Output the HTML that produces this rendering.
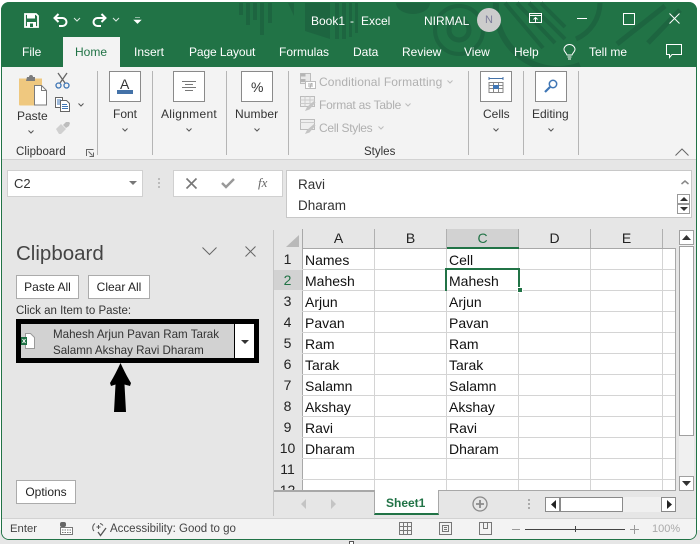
<!DOCTYPE html>
<html><head><meta charset="utf-8"><style>
html,body{margin:0;padding:0;background:#fff}
#p{position:relative;width:700px;height:544px;overflow:hidden;background:#fff;font-family:"Liberation Sans",sans-serif;color:#333}
.a{position:absolute}
.t{position:absolute;white-space:nowrap;font-size:12px;line-height:16px}
.w{color:#fff}
.g{color:#b0b0b0}
.box{position:absolute;background:#fff;border:1px solid #8a8a8a;box-sizing:border-box}
.btn{position:absolute;background:#fff;border:1px solid #ababab;box-sizing:border-box;font-size:12px;line-height:22px;text-align:center;color:#333}
.sep{position:absolute;width:1px;background:#b5b5b5;top:71px;height:84px}
.c{position:absolute;font-size:14px;line-height:20px;color:#111;white-space:nowrap}
.r{position:absolute;left:274px;width:27px;text-align:center;font-size:14px;line-height:20px;color:#222}
.h{position:absolute;top:229px;text-align:center;font-size:14px;line-height:19px;color:#222}
.hl{position:absolute;height:1px;left:302px;width:373px;background:#d4d4d4}
.vl{position:absolute;width:1px;top:249px;height:241px;background:#d4d4d4}
svg{position:absolute;overflow:visible}
</style></head><body><div id="p">

<!-- outer bottom strip -->
<div class="a" style="left:0;top:530px;width:700px;height:14px;background:#e6e6e6"></div>
<div class="a" style="left:349px;top:541px;width:5px;height:3px;border:1px solid #555;border-bottom:0;box-sizing:border-box;background:#fff"></div>

<!-- window -->
<div class="a" style="left:1px;top:2px;width:696px;height:538px;background:#e6e6e6;border:1px solid #217346;border-top:0;box-sizing:border-box;border-radius:8px 8px 8px 8px;overflow:hidden"></div>
<div class="a" style="left:1px;top:2px;width:696px;height:65px;background:#217346;border-radius:8px 8px 0 0"></div>

<!-- title pattern -->
<svg style="left:0;top:0" width="700" height="67" viewBox="0 0 700 67">
<g fill="#1d6540">
<rect x="239" y="3" width="4" height="12"/><rect x="246" y="3" width="4" height="22"/><rect x="253" y="3" width="4" height="17"/><rect x="260" y="3" width="4" height="32"/><rect x="268" y="3" width="4" height="20"/>
<path d="M288 3h6v13z"/><path d="M305 3h25v36l-25-8z"/><rect x="335" y="3" width="4" height="36"/><rect x="342" y="3" width="4" height="36"/><rect x="349" y="3" width="3" height="34"/><rect x="355" y="3" width="3" height="30"/>
<path d="M396 3h34a17 11 0 0 1-34 0z"/>
</g>
<g fill="none" stroke="#1d6540" stroke-width="5">
<circle cx="459" cy="30" r="10"/>
<circle cx="459" cy="30" r="24" stroke-width="4"/>
<path d="M496 3a62 62 0 0 0 84 62" stroke-width="6"/>
<path d="M505 3l38 45M517 3l38 40M529 3l36 36M541 3l24 24" stroke-width="4"/>
<path d="M665 6l-48 38M680 10l-32 33" stroke-width="5"/>
<path d="M600 3a40 40 0 0 1-24 36" stroke-width="5"/>
</g>
</svg>

<!-- QAT -->
<svg style="left:24px;top:13px" width="15" height="15" viewBox="0 0 15 15"><path d="M1 1h11l2 2v11H1z" fill="none" stroke="#fff" stroke-width="1.800"/><rect x="3" y="1" width="8" height="4.500" fill="#fff"/><rect x="3" y="9" width="9" height="5" fill="#fff"/><rect x="6" y="10.500" width="3" height="3.500" fill="#217346"/></svg>
<svg style="left:53px;top:13px" width="15" height="14" viewBox="0 0 15 14"><path d="M5.500 1L1.500 5 5.500 9M2 5h7.500a3.800 3.800 0 0 1 0 8H6" fill="none" stroke="#fff" stroke-width="2"/></svg>
<svg style="left:74px;top:18px" width="6" height="4"><path d="M0 0l3 3 3-3" fill="none" stroke="#dcebe2" stroke-width="1"/></svg>
<svg style="left:92px;top:13px" width="15" height="14" viewBox="0 0 15 14"><path d="M9.500 1l4 4-4 4M13 5H5.500a3.800 3.800 0 0 0 0 8H9" fill="none" stroke="#fff" stroke-width="2"/></svg>
<svg style="left:113px;top:18px" width="6" height="4"><path d="M0 0l3 3 3-3" fill="none" stroke="#dcebe2" stroke-width="1"/></svg>
<svg style="left:134px;top:17px" width="7" height="7"><path d="M1 .5h5M0 3h7l-3.500 3.500z" fill="#fff" stroke="#fff" stroke-width=".6"/></svg>

<div class="t w" style="left:311px;top:13px;font-size:12px">Book1</div>
<div class="t w" style="left:350px;top:13px">-</div>
<div class="t w" style="left:361px;top:13px">Excel</div>
<div class="t w" style="left:424px;top:13px">NIRMAL</div>
<div class="a" style="left:477px;top:8px;width:24px;height:24px;border-radius:50%;background:#ccc;color:#7d7d9a;font-size:11px;line-height:24px;text-align:center">N</div>
<svg style="left:529px;top:13px" width="14" height="11" viewBox="0 0 14 11"><path d="M.5.500h12v9H.5zM.5 2.500h12M6.500 9V4.500M4.500 6.500l2-2 2 2" fill="none" stroke="#fff"/></svg>
<div class="a" style="left:577px;top:18px;width:10px;height:1px;background:#fff"></div>
<div class="a" style="left:623px;top:13px;width:10px;height:10px;border:1px solid #fff"></div>
<svg style="left:669px;top:13px" width="11" height="11"><path d="M.5.500l10 10M10.500.500l-10 10" stroke="#fff" fill="none"/></svg>

<!-- tabs -->
<div class="a" style="left:63px;top:37px;width:57px;height:31px;background:#f3f3f3"></div>
<div class="t w" style="left:22px;top:44px">File</div>
<div class="t" style="left:75px;top:44px;color:#217346">Home</div>
<div class="t w" style="left:134px;top:44px">Insert</div>
<div class="t w" style="left:189px;top:44px;letter-spacing:-.1px">Page Layout</div>
<div class="t w" style="left:279px;top:44px">Formulas</div>
<div class="t w" style="left:353px;top:44px">Data</div>
<div class="t w" style="left:402px;top:44px">Review</div>
<div class="t w" style="left:464px;top:44px">View</div>
<div class="t w" style="left:514px;top:44px">Help</div>
<svg style="left:563px;top:44px" width="13" height="17" viewBox="0 0 13 17"><path d="M4 11C3 8.500 1 7.500 1 5.500a5.500 5 0 0 1 11 0c0 2-2 3-3 5.500zM4.500 13h4M5 15h3" fill="none" stroke="#fff"/></svg>
<div class="t w" style="left:589px;top:44px">Tell me</div>
<svg style="left:666px;top:44px" width="16" height="15" viewBox="0 0 16 15"><path d="M.5.500h15v10H6L3.500 13.500v-3h-3z" fill="none" stroke="#fff"/></svg>

<!-- ribbon -->
<div class="a" style="left:2px;top:67px;width:694px;height:92px;background:#f3f3f3;border-bottom:1px solid #d2d2d2"></div>
<div class="sep" style="left:97px"></div><div class="sep" style="left:152px"></div><div class="sep" style="left:226px"></div><div class="sep" style="left:288px"></div><div class="sep" style="left:468px"></div><div class="sep" style="left:523px"></div><div class="sep" style="left:578px"></div>

<!-- clipboard group -->
<svg style="left:18px;top:74px" width="30" height="32" viewBox="0 0 30 32"><path d="M1 4.500h23v27H2a1 1 0 0 1-1-1z" fill="#efc87f"/><path d="M9 3h2a2 2 0 0 1 4 0h2v4H8z" fill="#7c7c7c"/><path d="M16.500 11.500h7l5 5v14.500h-12z" fill="#fff" stroke="#7b7b7b"/><path d="M23.500 11.500v5h5" fill="none" stroke="#7b7b7b"/></svg>
<div class="t" style="left:17px;top:108px">Paste</div>
<svg style="left:28px;top:130px" width="6" height="4"><path d="M.500.500l2.500 2.500 2.500-2.500" fill="none" stroke="#555"/></svg>
<svg style="left:55px;top:72px" width="16" height="17" viewBox="0 0 16 17"><path d="M3 1l7 10M12 1L5 11" stroke="#666" stroke-width="1.300" fill="none"/><circle cx="3.500" cy="13.500" r="2.500" fill="none" stroke="#3f76b5" stroke-width="1.300"/><circle cx="11.500" cy="13.500" r="2.500" fill="none" stroke="#3f76b5" stroke-width="1.300"/></svg>
<svg style="left:55px;top:97px" width="16" height="15" viewBox="0 0 16 15"><path d="M.500.500h7v10h-7z" fill="#fff" stroke="#666"/><path d="M5.500 3.500h6l3 3v8h-9z" fill="#fff" stroke="#666"/><path d="M2 3h4M2 5h3M2 7h3M7 7.500h5M7 9.500h6M7 11.500h6" stroke="#3f76b5"/></svg>
<svg style="left:78px;top:103px" width="6" height="4"><path d="M.500.500l2.500 2.500 2.500-2.500" fill="none" stroke="#555"/></svg>
<svg style="left:55px;top:120px" width="17" height="15" viewBox="0 0 17 15"><path d="M1 9l5-5 5 5-5 5H4z" fill="#d0d0d0"/><path d="M8 5l3-3 3 0 1 1-1 3-3 2z" fill="#bdbdbd"/></svg>
<div class="t" style="left:16px;top:144px;font-size:11.500px;letter-spacing:.05px">Clipboard</div>
<svg style="left:86px;top:149px" width="8" height="8"><path d="M.500 7V.500H7.500M2.500 2.500l4 4M7.500 3.500v4h-4" fill="none" stroke="#666"/></svg>

<!-- Font -->
<div class="box" style="left:109px;top:71px;width:32px;height:31px"></div>
<div class="t" style="left:120px;top:77px;font-size:14px;line-height:14px;color:#333">A</div>
<div class="a" style="left:117px;top:90px;width:16px;height:4px;background:#4472a8"></div>
<div class="t" style="left:113px;top:106px">Font</div>
<svg style="left:122px;top:128px" width="6" height="4"><path d="M.500.500l2.500 2.500 2.500-2.500" fill="none" stroke="#555"/></svg>

<!-- Alignment -->
<div class="box" style="left:173px;top:71px;width:32px;height:31px"></div>
<svg style="left:182px;top:81px" width="14" height="10"><path d="M0 .500h14M3 3.500h8M0 6.500h14M3 9.500h8" stroke="#777"/></svg>
<div class="t" style="left:161px;top:106px;letter-spacing:.3px">Alignment</div>
<svg style="left:186px;top:128px" width="6" height="4"><path d="M.500.500l2.500 2.500 2.500-2.500" fill="none" stroke="#555"/></svg>

<!-- Number -->
<div class="box" style="left:241px;top:71px;width:32px;height:31px"></div>
<div class="t" style="left:251px;top:79px;font-size:14px">%</div>
<div class="t" style="left:235px;top:106px;letter-spacing:.1px">Number</div>
<svg style="left:254px;top:128px" width="6" height="4"><path d="M.500.500l2.500 2.500 2.500-2.500" fill="none" stroke="#555"/></svg>

<!-- Styles -->
<svg style="left:300px;top:73px" width="16" height="16" viewBox="0 0 16 16"><path d="M.500.500h10v10H.500z" fill="#e8e8e8" stroke="#bcbcbc"/><path d="M.500.500h5v3h-5zM.500 6h5v3h-5z" fill="#b5b5b5"/><path d="M5.500 8.500h10v7h-10z" fill="#fff" stroke="#bcbcbc"/><path d="M8 11h5M8 13h5M11.500 10l-1.500 5" stroke="#aaa"/></svg>
<div class="t g" style="left:319px;top:74px;letter-spacing:.12px">Conditional Formatting</div>
<svg style="left:447px;top:80px" width="6" height="4"><path d="M.500.500l2.500 2.500 2.500-2.500" fill="none" stroke="#bbb"/></svg>
<svg style="left:300px;top:96px" width="16" height="16" viewBox="0 0 16 16"><path d="M.500.500h14v10H.500z" fill="#eee" stroke="#bcbcbc"/><path d="M5 .500v10M10 .500v10M.500 4h14M.500 7.500h14" stroke="#ccc"/><path d="M5 15l2-4 7-6 1.500 1.500-6 7z" fill="#c4c4c4"/></svg>
<div class="t g" style="left:319px;top:97px;letter-spacing:-.25px">Format as Table</div>
<svg style="left:405px;top:103px" width="6" height="4"><path d="M.500.500l2.500 2.500 2.500-2.500" fill="none" stroke="#bbb"/></svg>
<svg style="left:300px;top:119px" width="16" height="16" viewBox="0 0 16 16"><path d="M.500.500h14v10H.500z" fill="#eee" stroke="#bcbcbc"/><path d="M.500 3.500h14" stroke="#ccc"/><path d="M5 15l2-4 7-6 1.500 1.500-6 7z" fill="#c4c4c4"/></svg>
<div class="t g" style="left:319px;top:120px;letter-spacing:-.3px">Cell Styles</div>
<svg style="left:378px;top:126px" width="6" height="4"><path d="M.500.500l2.500 2.500 2.500-2.500" fill="none" stroke="#bbb"/></svg>
<div class="t" style="left:364px;top:144px;font-size:11.500px">Styles</div>

<!-- Cells -->
<div class="box" style="left:480px;top:71px;width:32px;height:31px"></div>
<svg style="left:488px;top:77px" width="16" height="18" viewBox="0 0 16 18"><path d="M1 1.500h14M1 0v3M15 0v3" stroke="#4472a8"/><path d="M1 5.500h14v10H1zM1 8.500h14M1 11.500h14M5.500 5.500v10M10.500 5.500v10" fill="#fff" stroke="#888"/><rect x="5" y="8" width="6" height="4" fill="#3f76b5"/></svg>
<div class="t" style="left:483px;top:106px">Cells</div>
<svg style="left:493px;top:128px" width="6" height="4"><path d="M.500.500l2.500 2.500 2.500-2.500" fill="none" stroke="#555"/></svg>

<!-- Editing -->
<div class="box" style="left:535px;top:71px;width:32px;height:31px"></div>
<svg style="left:544px;top:79px" width="14" height="14" viewBox="0 0 14 14"><circle cx="9" cy="5" r="3.700" fill="none" stroke="#3f76b5" stroke-width="1.500"/><path d="M6 8l-5 5" stroke="#3f76b5" stroke-width="2.200"/></svg>
<div class="t" style="left:532px;top:106px">Editing</div>
<svg style="left:548px;top:128px" width="6" height="4"><path d="M.500.500l2.500 2.500 2.500-2.500" fill="none" stroke="#555"/></svg>
<svg style="left:675px;top:148px" width="14" height="8"><path d="M.500 7.500l6.500-6.500 6.500 6.500" fill="none" stroke="#666"/></svg>

<!-- formula bar -->
<div class="btn" style="left:7px;top:170px;width:136px;height:27px;border-color:#d0d0d0"></div>
<div class="t" style="left:14px;top:176px;font-size:13px">C2</div>
<svg style="left:129px;top:181px" width="8" height="4"><path d="M0 0h8L4 4z" fill="#777"/></svg>
<div class="a" style="left:158px;top:178px;width:2px;height:2px;background:#bbb;box-shadow:0 4px #bbb,0 8px #bbb"></div>
<div class="btn" style="left:173px;top:170px;width:110px;height:27px;border-color:#d0d0d0"></div>
<svg style="left:186px;top:178px" width="11" height="11"><path d="M.500.500l10 10M10.500.500l-10 10" stroke="#777" stroke-width="1.600"/></svg>
<svg style="left:221px;top:178px" width="14" height="11"><path d="M1 5l4 4 8-8" stroke="#999" stroke-width="2.400" fill="none"/></svg>
<div class="t" style="left:258px;top:175px;font-family:'Liberation Serif',serif;font-style:italic;font-size:13px;color:#666">fx</div>
<div class="btn" style="left:286px;top:170px;width:406px;height:48px;border-color:#c8c8c8"></div>
<div class="t" style="left:298px;top:176px;font-size:13.500px;line-height:18px">Ravi</div>
<div class="t" style="left:298px;top:197px;font-size:13.500px;line-height:18px">Dharam</div>
<svg style="left:681px;top:180px" width="8" height="5"><path d="M.500 4l3.500-3 3.500 3" stroke="#888" stroke-width="1.500" fill="none"/></svg>
<div class="box" style="left:677px;top:194px;width:13px;height:10px;border-color:#999"></div>
<div class="box" style="left:677px;top:204px;width:13px;height:10px;border-color:#999"></div>
<svg style="left:680px;top:197px" width="8" height="14"><path d="M0 4l4-4 4 4zM0 10h8l-4 4z" fill="#333"/></svg>

<!-- clipboard pane -->
<div class="a" style="left:273px;top:230px;width:1px;height:286px;background:#c6c6c6"></div>
<div class="t" style="left:16px;top:241px;font-size:20.500px;line-height:26px;color:#444">Clipboard</div>
<svg style="left:202px;top:247px" width="15" height="9"><path d="M.500.500l7 7 7-7" fill="none" stroke="#666"/></svg>
<svg style="left:245px;top:246px" width="11" height="11"><path d="M.500.500l10 10M10.500.500l-10 10" stroke="#666"/></svg>
<div class="btn" style="left:16px;top:275px;width:63px;height:24px;color:#222">Paste All</div>
<div class="btn" style="left:88px;top:275px;width:62px;height:24px;color:#222">Clear All</div>
<div class="t" style="left:16px;top:303px;font-size:11.500px">Click an Item to Paste:</div>
<div class="a" style="left:16px;top:319px;width:243px;height:44px;background:#000"></div>
<div class="a" style="left:21px;top:324px;width:213px;height:34px;background:#d2d2d2"></div>
<div class="a" style="left:235px;top:324px;width:19px;height:34px;background:#fff"></div>
<svg style="left:241px;top:340px" width="8" height="4"><path d="M0 0h8L4 4z" fill="#333"/></svg>
<svg style="left:21px;top:333px" width="14" height="17" viewBox="0 0 14 17"><path d="M4.500.500h5l4 4v11h-9z" fill="#fff" stroke="#9a9a9a"/><rect x="0" y="4" width="6" height="8" fill="#1e7145"/><path d="M1.500 6l3 4M4.500 6l-3 4" stroke="#fff"/></svg>
<div class="t" style="left:53px;top:327px;font-size:11.600px;color:#333">Mahesh Arjun Pavan Ram Tarak</div>
<div class="t" style="left:53px;top:343px;font-size:11.600px;color:#333">Salamn Akshay Ravi Dharam</div>
<svg style="left:110px;top:363px" width="22" height="50" viewBox="0 0 22 50"><path d="M10.500 0Q17 14 21 20l-1 3-5.500-1.500L16 49H4L5.500 21.500 1 23 0 20Q5 12 10.500 0z" fill="#000"/></svg>
<div class="btn" style="left:16px;top:480px;width:60px;height:24px;color:#222">Options</div>

<!-- grid -->
<div class="a" style="left:274px;top:229px;width:401px;height:261px;background:#fff"></div>
<div class="a" style="left:274px;top:229px;width:401px;height:19px;background:#e6e6e6"></div>
<div class="a" style="left:274px;top:248px;width:28px;height:242px;background:#e6e6e6"></div>
<div class="a" style="left:447px;top:229px;width:72px;height:19px;background:#d2d2d2"></div>
<div class="a" style="left:274px;top:270px;width:28px;height:20px;background:#d2d2d2"></div>
<svg style="left:286px;top:235px" width="13" height="12"><path d="M13 0v12H0z" fill="#b9b9b9"/></svg>
<div class="a" style="left:302px;top:229px;width:1px;height:261px;background:#a8a8a8"></div>
<div class="a" style="left:302px;top:248px;width:373px;height:1px;background:#a8a8a8"></div>
<div class="a" style="left:374px;top:229px;width:1px;height:19px;background:#b0b0b0"></div>
<div class="a" style="left:446px;top:229px;width:1px;height:19px;background:#b0b0b0"></div>
<div class="a" style="left:518px;top:229px;width:1px;height:19px;background:#b0b0b0"></div>
<div class="a" style="left:590px;top:229px;width:1px;height:19px;background:#b0b0b0"></div>
<div class="a" style="left:662px;top:229px;width:1px;height:19px;background:#b0b0b0"></div>
<div class="a" style="left:675px;top:248px;width:1px;height:243px;background:#a8a8a8"></div>
<div class="a" style="left:274px;top:490px;width:402px;height:1px;background:#a8a8a8"></div>
<div class="a" style="left:447px;top:247px;width:72px;height:2px;background:#217346"></div>

<div class="h" style="left:303px;width:71px">A</div>
<div class="h" style="left:375px;width:71px">B</div>
<div class="h" style="left:447px;width:71px;color:#217346">C</div>
<div class="h" style="left:519px;width:71px">D</div>
<div class="h" style="left:591px;width:71px">E</div>

<div class="hl" style="top:269px"></div><div class="hl" style="top:290px"></div><div class="hl" style="top:311px"></div><div class="hl" style="top:332px"></div><div class="hl" style="top:353px"></div><div class="hl" style="top:374px"></div><div class="hl" style="top:395px"></div><div class="hl" style="top:416px"></div><div class="hl" style="top:437px"></div><div class="hl" style="top:458px"></div><div class="hl" style="top:479px"></div>
<div class="vl" style="left:374px"></div><div class="vl" style="left:446px"></div><div class="vl" style="left:518px"></div><div class="vl" style="left:590px"></div><div class="vl" style="left:662px"></div>

<div class="r" style="top:249px">1</div>
<div class="r" style="top:270px;color:#217346">2</div>
<div class="r" style="top:291px">3</div>
<div class="r" style="top:312px">4</div>
<div class="r" style="top:333px">5</div>
<div class="r" style="top:354px">6</div>
<div class="r" style="top:375px">7</div>
<div class="r" style="top:396px">8</div>
<div class="r" style="top:417px">9</div>
<div class="r" style="top:438px">10</div>
<div class="r" style="top:459px">11</div>
<div class="a" style="left:274px;top:480px;width:28px;height:10px;overflow:hidden"><div class="r" style="left:0;top:0">12</div></div>

<div class="c" style="left:305px;top:250px">Names</div>
<div class="c" style="left:305px;top:271px">Mahesh</div>
<div class="c" style="left:305px;top:292px">Arjun</div>
<div class="c" style="left:305px;top:313px">Pavan</div>
<div class="c" style="left:305px;top:334px">Ram</div>
<div class="c" style="left:305px;top:355px">Tarak</div>
<div class="c" style="left:305px;top:376px">Salamn</div>
<div class="c" style="left:305px;top:397px">Akshay</div>
<div class="c" style="left:305px;top:418px">Ravi</div>
<div class="c" style="left:305px;top:439px">Dharam</div>
<div class="c" style="left:449px;top:250px">Cell</div>
<div class="c" style="left:449px;top:271px">Mahesh</div>
<div class="c" style="left:449px;top:292px">Arjun</div>
<div class="c" style="left:449px;top:313px">Pavan</div>
<div class="c" style="left:449px;top:334px">Ram</div>
<div class="c" style="left:449px;top:355px">Tarak</div>
<div class="c" style="left:449px;top:376px">Salamn</div>
<div class="c" style="left:449px;top:397px">Akshay</div>
<div class="c" style="left:449px;top:418px">Ravi</div>
<div class="c" style="left:449px;top:439px">Dharam</div>

<div class="a" style="left:445px;top:268px;width:75px;height:23px;border:2px solid #217346;box-sizing:border-box;border-bottom:0;border-right:2px solid #217346"></div>
<div class="a" style="left:518px;top:288px;width:4px;height:4px;background:#217346;border:1px solid #fff;box-sizing:content-box;margin:-1px"></div>

<!-- vertical scroll -->
<div class="a" style="left:679px;top:230px;width:15px;height:285px;background:#f0f0f0"></div>
<div class="box" style="left:679px;top:230px;width:15px;height:15px;border-color:#a0a0a0"></div>
<svg style="left:682px;top:235px" width="9" height="5"><path d="M0 5l4.500-5 4.500 5z" fill="#333"/></svg>
<div class="box" style="left:679px;top:246px;width:15px;height:190px;border-color:#a0a0a0"></div>
<div class="box" style="left:679px;top:476px;width:15px;height:15px;border-color:#a0a0a0"></div>
<svg style="left:682px;top:481px" width="9" height="5"><path d="M0 0h9l-4.500 5z" fill="#333"/></svg>

<!-- tabs bar -->
<div class="a" style="left:274px;top:491px;width:421px;height:25px;background:#e6e6e6"></div>
<div class="a" style="left:274px;top:491px;width:100px;height:1px;background:#a8a8a8"></div>
<div class="a" style="left:374px;top:490px;width:65px;height:25px;background:#fff;border-left:1px solid #a8a8a8;border-right:1px solid #a8a8a8;border-bottom:2px solid #217346;box-sizing:border-box"></div>
<div class="t" style="left:386px;top:495px;font-weight:bold;color:#217346;font-size:12px">Sheet1</div>
<svg style="left:472px;top:496px" width="16" height="16"><circle cx="8" cy="8" r="7" fill="none" stroke="#8a8a8a" stroke-width="1.300"/><path d="M8 4v8M4 8h8" stroke="#8a8a8a" stroke-width="1.800"/></svg>
<div class="a" style="left:528px;top:499px;width:2px;height:2px;background:#aaa;box-shadow:0 4px #aaa,0 8px #aaa"></div>
<svg style="left:301px;top:499px" width="40" height="10"><path d="M5 0L0 5l5 5zM30 0l5 5-5 5z" fill="#c4c4c4"/></svg>
<div class="a" style="left:545px;top:497px;width:131px;height:15px;background:#f0f0f0"></div>
<div class="box" style="left:545px;top:497px;width:15px;height:15px;border-color:#8a8a8a"></div>
<svg style="left:551px;top:500px" width="5" height="9"><path d="M5 0L0 4.500 5 9z" fill="#222"/></svg>
<div class="box" style="left:560px;top:497px;width:63px;height:15px;border-color:#8a8a8a"></div>
<div class="box" style="left:661px;top:497px;width:15px;height:15px;border-color:#8a8a8a"></div>
<svg style="left:667px;top:500px" width="5" height="9"><path d="M0 0l5 4.500L0 9z" fill="#222"/></svg>

<!-- status bar -->
<div class="a" style="left:2px;top:518px;width:694px;height:21px;background:#f3f3f3;border-top:1px solid #d2d2d2;border-radius:0 0 7px 7px;box-sizing:border-box"></div>
<div class="t" style="left:10px;top:521px;font-size:11.300px;color:#444">Enter</div>
<svg style="left:60px;top:522px" width="13" height="13" viewBox="0 0 13 13"><rect x="0" y="0" width="6" height="5" fill="#666" rx="2"/><path d="M.500 5.500h12v7H.500z" fill="#fff" stroke="#777"/><path d="M2 8h9M2 10.500h9" stroke="#777" stroke-dasharray="1.500 1"/></svg>
<svg style="left:91px;top:522px" width="16" height="15" viewBox="0 0 16 15"><path d="M4 1.500A5 5 0 0 0 3 9M9 1.500a5 5 0 0 1 3 2M5.500 5h4M7.500 3v4" fill="none" stroke="#555"/><path d="M7 10l2.500 3.500L15 6" fill="none" stroke="#555" stroke-width="1.300"/></svg>
<div class="t" style="left:110px;top:521px;font-size:11.500px;color:#444">Accessibility: Good to go</div>
<svg style="left:399px;top:522px" width="13" height="13"><path d="M.500.500h12v12H.500zM4.500.500v12M8.500.500v12M.500 4.500h12M.500 8.500h12" fill="none" stroke="#777"/></svg>
<svg style="left:439px;top:522px" width="13" height="13"><path d="M.500.500h12v12H.500z" fill="none" stroke="#777"/><path d="M3.500 3.500h6v6h-6zM5 5.500h3M5 7.500h3" fill="none" stroke="#777"/></svg>
<svg style="left:479px;top:522px" width="13" height="13"><path d="M.500.500h12v12H.500zM4.500.500v6h4v-6" fill="none" stroke="#777"/></svg>
<div class="a" style="left:512px;top:529px;width:8px;height:1px;background:#999"></div>
<div class="a" style="left:525px;top:529px;width:100px;height:1px;background:#444"></div>
<div class="a" style="left:575px;top:526px;width:1px;height:6px;background:#444"></div>
<svg style="left:630px;top:525px" width="9" height="9"><path d="M4.500 0v9M0 4.500h9" stroke="#999"/></svg>
<div class="t" style="left:652px;top:521px;font-size:11px;color:#aaa">100%</div>
</div></body></html>
